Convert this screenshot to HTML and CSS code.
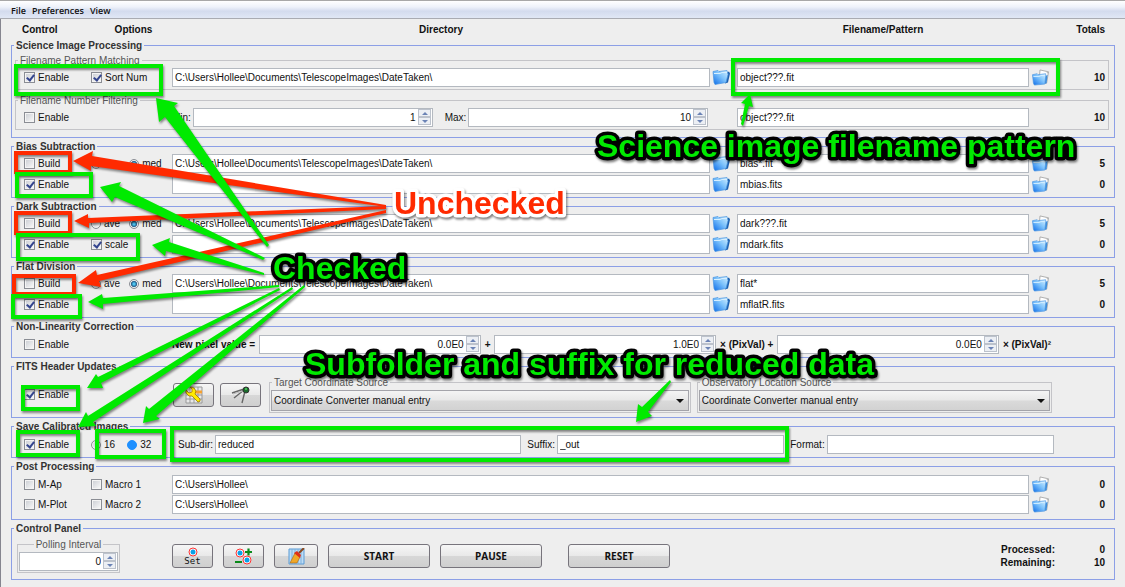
FILE: index.html
```html
<!DOCTYPE html>
<html lang="en">
<head>
<meta charset="utf-8">
<title>Data Processor</title>
<link rel="stylesheet" href="styles.css">
</head>
<body>
<svg class="defs" aria-hidden="true">
  <defs>
    <linearGradient id="blue" x1="1" y1="0" x2="0" y2="1">
      <stop offset="0" stop-color="#d4f0ff"/><stop offset=".45" stop-color="#7cc2fc"/><stop offset="1" stop-color="#0a6ae8"/>
    </linearGradient>
    <symbol id="folder" viewBox="0 0 19 16">
      <path d="M13 4l4-2 1 2-2 9-3 1z" fill="#1b5fae"/>
      <path d="M1 2l5-1 1 1 8-1 1 4-2 8-11 2-1-2z" fill="url(#blue)" stroke="#4a95e0" stroke-width=".7"/>
      <path d="M2 4l6 0 2-1 5 0" stroke="#d6efff" fill="none"/>
    </symbol>
    <symbol id="folder-doc" viewBox="0 0 19 18">
      <path d="M9 1l9 2-2 12-8-2z" fill="#fff" stroke="#999" stroke-width=".8"/>
      <path d="M15 2l3 1-1 2z" fill="#bbb"/>
      <path d="M14 8l3-2-1 9-2 1z" fill="#3f8fdc"/>
      <path d="M1 6l5-1 1 1 8-1 0 3-1 8-11 1-1-2z" fill="url(#blue)" stroke="#4a95e0" stroke-width=".7"/>
      <path d="M2 8l6 0 2-1 4 0" stroke="#d6efff" fill="none"/>
    </symbol>
  </defs>
</svg>

<nav class="menubar">
  <button type="button">File</button><button type="button">Preferences</button><button type="button">View</button>
</nav>

<main class="panel">
  <header class="cols heads">
    <b>Control</b><b>Options</b><b>Directory</b><span></span><b>Filename/Pattern</b><b>Totals</b>
  </header>

  <fieldset class="group">
    <legend>Science Image Processing</legend>
    <div class="nest">
      <fieldset class="sub">
        <legend>Filename Pattern Matching</legend>
        <div class="cols sub-body">
          <label class="opt"><input type="checkbox" checked>Enable</label>
          <label class="opt"><input type="checkbox" checked>Sort Num</label>
          <input class="field" type="text" aria-label="Science directory" value="C:\Users\Hollee\Documents\TelescopeImages\DateTaken\">
          <button class="pick" type="button" aria-label="Choose science directory"><svg><use href="#folder"/></svg></button>
          <input class="field" type="text" aria-label="Science filename pattern" value="object???.fit">
          <div class="end"><button class="pick doc" type="button" aria-label="Choose science file"><svg><use href="#folder-doc"/></svg></button><b>10</b></div>
        </div>
      </fieldset>
      <fieldset class="sub">
        <legend>Filename Number Filtering</legend>
        <div class="cols sub-body">
          <label class="opt"><input type="checkbox">Enable</label>
          <span></span>
          <div class="range">
            <label for="min">Min:</label>
            <span class="spin"><input id="min" type="text" value="1"><button type="button" aria-label="Increase"></button><button type="button" aria-label="Decrease"></button></span>
            <label for="max" class="second">Max:</label>
            <span class="spin"><input id="max" type="text" value="10"><button type="button" aria-label="Increase"></button><button type="button" aria-label="Decrease"></button></span>
          </div>
          <span></span>
          <input class="field" type="text" aria-label="Number filter pattern" value="object???.fit">
          <div class="end"><b>10</b></div>
        </div>
      </fieldset>
    </div>
  </fieldset>

  <fieldset class="group">
    <legend>Bias Subtraction</legend>
    <div class="rows">
      <div class="cols">
        <label class="opt"><input type="checkbox">Build</label>
        <div class="pair"><label class="opt"><input type="radio" name="bias">ave</label><label class="opt"><input type="radio" name="bias" checked>med</label></div>
        <input class="field" type="text" aria-label="Bias directory" value="C:\Users\Hollee\Documents\TelescopeImages\DateTaken\">
        <button class="pick" type="button" aria-label="Choose bias directory"><svg><use href="#folder"/></svg></button>
        <input class="field" type="text" aria-label="Bias pattern" value="bias*.fit">
        <div class="end"><button class="pick doc" type="button" aria-label="Choose bias file"><svg><use href="#folder-doc"/></svg></button><b>5</b></div>
      </div>
      <div class="cols">
        <label class="opt"><input type="checkbox" checked>Enable</label>
        <span></span>
        <input class="field" type="text" aria-label="Master bias directory">
        <button class="pick" type="button" aria-label="Choose master bias directory"><svg><use href="#folder"/></svg></button>
        <input class="field" type="text" aria-label="Master bias file" value="mbias.fits">
        <div class="end"><button class="pick doc" type="button" aria-label="Choose master bias file"><svg><use href="#folder-doc"/></svg></button><b>0</b></div>
      </div>
    </div>
  </fieldset>

  <fieldset class="group">
    <legend>Dark Subtraction</legend>
    <div class="rows">
      <div class="cols">
        <label class="opt"><input type="checkbox">Build</label>
        <div class="pair"><label class="opt"><input type="radio" name="dark">ave</label><label class="opt"><input type="radio" name="dark" checked>med</label></div>
        <input class="field" type="text" aria-label="Dark directory" value="C:\Users\Hollee\Documents\TelescopeImages\DateTaken\">
        <button class="pick" type="button" aria-label="Choose dark directory"><svg><use href="#folder"/></svg></button>
        <input class="field" type="text" aria-label="Dark pattern" value="dark???.fit">
        <div class="end"><button class="pick doc" type="button" aria-label="Choose dark file"><svg><use href="#folder-doc"/></svg></button><b>5</b></div>
      </div>
      <div class="cols">
        <label class="opt"><input type="checkbox" checked>Enable</label>
        <label class="opt"><input type="checkbox" checked>scale</label>
        <input class="field" type="text" aria-label="Master dark directory">
        <button class="pick" type="button" aria-label="Choose master dark directory"><svg><use href="#folder"/></svg></button>
        <input class="field" type="text" aria-label="Master dark file" value="mdark.fits">
        <div class="end"><button class="pick doc" type="button" aria-label="Choose master dark file"><svg><use href="#folder-doc"/></svg></button><b>0</b></div>
      </div>
    </div>
  </fieldset>

  <fieldset class="group">
    <legend>Flat Division</legend>
    <div class="rows">
      <div class="cols">
        <label class="opt"><input type="checkbox">Build</label>
        <div class="pair"><label class="opt"><input type="radio" name="flat">ave</label><label class="opt"><input type="radio" name="flat" checked>med</label></div>
        <input class="field" type="text" aria-label="Flat directory" value="C:\Users\Hollee\Documents\TelescopeImages\DateTaken\">
        <button class="pick" type="button" aria-label="Choose flat directory"><svg><use href="#folder"/></svg></button>
        <input class="field" type="text" aria-label="Flat pattern" value="flat*">
        <div class="end"><button class="pick doc" type="button" aria-label="Choose flat file"><svg><use href="#folder-doc"/></svg></button><b>5</b></div>
      </div>
      <div class="cols">
        <label class="opt"><input type="checkbox" checked>Enable</label>
        <span></span>
        <input class="field" type="text" aria-label="Master flat directory">
        <button class="pick" type="button" aria-label="Choose master flat directory"><svg><use href="#folder"/></svg></button>
        <input class="field" type="text" aria-label="Master flat file" value="mflatR.fits">
        <div class="end"><button class="pick doc" type="button" aria-label="Choose master flat file"><svg><use href="#folder-doc"/></svg></button><b>0</b></div>
      </div>
    </div>
  </fieldset>

  <fieldset class="group">
    <legend>Non-Linearity Correction</legend>
    <div class="line single">
      <label class="opt"><input type="checkbox">Enable</label>
      <div class="formula">
        <b>New pixel value =</b>
        <span class="spin"><input aria-label="Constant coefficient" type="text" value="0.0E0"><button type="button" aria-label="Increase"></button><button type="button" aria-label="Decrease"></button></span>
        <b>+</b>
        <span class="spin"><input aria-label="Linear coefficient" type="text" value="1.0E0"><button type="button" aria-label="Increase"></button><button type="button" aria-label="Decrease"></button></span>
        <b>× (PixVal) +</b>
        <span class="spin"><input aria-label="Quadratic coefficient" type="text" value="0.0E0"><button type="button" aria-label="Increase"></button><button type="button" aria-label="Decrease"></button></span>
        <b>× (PixVal)²</b>
      </div>
    </div>
  </fieldset>

  <fieldset class="group">
    <legend>FITS Header Updates</legend>
    <div class="line fits">
      <label class="opt"><input type="checkbox" checked>Enable</label>
      <div class="sources">
        <button class="btn tool" type="button" aria-label="Header settings">
          <svg width="18" height="18" viewBox="0 0 18 18"><path d="M1 1h16v16H1z" fill="#e8e8e8"/><path d="M1 1v16M5 1v16M9 1v16M13 1v16M17 1v16M1 1h16M1 9h16M1 13h16M1 17h16" stroke="#999" fill="none"/><path d="M10 6h7" stroke="#f5a030" stroke-width="3"/><path d="M5 1l4 1 2 3-1 3 5 5q1 3-2 3l-6-6-3 0-3-3 0-3 3 3 3-1 0-3z" fill="#ffea00" stroke="#a07800" stroke-width=".8"/></svg>
        </button>
        <button class="btn tool" type="button" aria-label="Coordinate converter">
          <svg width="20" height="18" viewBox="0 0 20 18"><path d="M1 7l12-4M3 12l10-8M11 17l3-12" stroke="#666" stroke-width="1.400"/><path d="M2 8l10-3" stroke="#bbb"/><circle cx="15" cy="4" r="3" fill="#1b6c2c" stroke="#333"/><circle cx="15" cy="3" r="1" fill="#52d35f"/></svg>
        </button>
        <fieldset class="sub target">
          <legend>Target Coordinate Source</legend>
          <div class="drop"><select aria-label="Target Coordinate Source"><option>Coordinate Converter manual entry</option></select></div>
        </fieldset>
        <fieldset class="sub observatory">
          <legend>Observatory Location Source</legend>
          <div class="drop"><select aria-label="Observatory Location Source"><option>Coordinate Converter manual entry</option></select></div>
        </fieldset>
      </div>
    </div>
  </fieldset>

  <fieldset class="group">
    <legend>Save Calibrated Images</legend>
    <div class="line single">
      <label class="opt"><input type="checkbox" checked>Enable</label>
      <div class="pair depth"><label class="opt"><input type="radio" name="bits">16</label><label class="opt"><input class="marked" type="radio" name="bits" checked>32</label></div>
      <div class="saving">
        <label for="subdir">Sub-dir:</label><input id="subdir" class="field wide" type="text" value="reduced">
        <label for="suffix" class="second">Suffix:</label><input id="suffix" class="field" type="text" value="_out">
        <label for="format" class="second">Format:</label><input id="format" class="field" type="text">
      </div>
    </div>
  </fieldset>

  <fieldset class="group">
    <legend>Post Processing</legend>
    <div class="rows post">
      <div class="cols">
        <label class="opt"><input type="checkbox">M-Ap</label>
        <label class="opt"><input type="checkbox">Macro 1</label>
        <input class="field span" type="text" aria-label="Macro 1 path" value="C:\Users\Hollee\">
        <div class="end"><button class="pick doc" type="button" aria-label="Choose macro 1"><svg><use href="#folder-doc"/></svg></button><b>0</b></div>
      </div>
      <div class="cols">
        <label class="opt"><input type="checkbox">M-Plot</label>
        <label class="opt"><input type="checkbox">Macro 2</label>
        <input class="field span" type="text" aria-label="Macro 2 path" value="C:\Users\Hollee\">
        <div class="end"><button class="pick doc" type="button" aria-label="Choose macro 2"><svg><use href="#folder-doc"/></svg></button><b>0</b></div>
      </div>
    </div>
  </fieldset>

  <fieldset class="group">
    <legend>Control Panel</legend>
    <div class="control">
      <fieldset class="sub polling">
        <legend>Polling Interval</legend>
        <span class="spin"><input aria-label="Polling Interval" type="text" value="0"><button type="button" aria-label="Increase"></button><button type="button" aria-label="Decrease"></button></span>
      </fieldset>
      <div class="actions">
        <button class="btn tool set" type="button"><svg width="10" height="10" viewBox="0 0 10 10"><circle cx="5" cy="5" r="4" fill="#fff" stroke="#f33"/><circle cx="5" cy="5" r="2.500" fill="#0aa0e8"/></svg>Set</button>
        <button class="btn tool" type="button" aria-label="Change apertures"><svg width="18" height="17" viewBox="0 0 18 17"><circle cx="5" cy="5" r="4" fill="#fff" stroke="#f33"/><circle cx="5" cy="5" r="2.500" fill="#0aa0e8"/><circle cx="12" cy="12" r="4" fill="#fff" stroke="#f33"/><circle cx="12" cy="12" r="2.500" fill="#0aa0e8"/><path d="M10 4h7M13.500.5v7M0 14h7" stroke="#0a8a1a" stroke-width="2.200"/></svg></button>
        <button class="btn tool clear" type="button" aria-label="Clear"><svg width="17" height="17" viewBox="0 0 17 17"><path d="M1 1h15v15H1z" fill="#bddcf5" stroke="#5a9bd5"/><path d="M4 1v15M7 1v15M10 1v15M13 1v15" stroke="#7fb0dc"/><path d="M16 0l-5 5" stroke="#8a4a20" stroke-width="2"/><path d="M7 5l5 4-3 6-7 0z" fill="#f0a828" stroke="#a86010" stroke-width=".6"/><path d="M9 3l4 4-1 3-6-5z" fill="#e03018"/></svg></button>
        <button class="btn main" type="button">START</button>
        <button class="btn main" type="button">PAUSE</button>
        <button class="btn main reset" type="button">RESET</button>
      </div>
      <dl class="stats"><dt>Processed:</dt><dd>0</dd><dt>Remaining:</dt><dd>10</dd></dl>
    </div>
  </fieldset>
</main>

<svg class="notes" viewBox="0 0 1125 587">
  <g class="red">
    <path class="arrow" d="M386 205L92 156L93 151L73 161L91 171L91 166L386 207z"/>
    <path class="arrow" d="M386 206L88 218L88 214L74 221L89 228L89 223L386 209z"/>
    <path class="arrow" d="M386 210L97 275L96 270L78 283L101 287L99 281L386 213z"/>
    <rect x="16" y="153" width="54" height="19"/>
    <rect x="16" y="213" width="54" height="20"/>
    <rect x="14" y="276" width="60" height="18"/>
  </g>
  <g class="green">
    <path class="arrow" d="M269 245L174 106L178 103L156 98L159 122L165 117L267 247z"/>
    <path class="arrow" d="M265 258L119 186L121 182L100 187L112 202L115 197L263 260z"/>
    <path class="arrow" d="M264 273L169 242L170 238L152 245L165 256L166 251L264 275z"/>
    <path class="arrow" d="M279 285L103 298L102 294L88 302L103 309L103 304L279 287z"/>
    <path class="arrow" d="M279 288L98 377L96 374L87 388L103 388L101 383L280 290z"/>
    <path class="arrow" d="M292 287L88 416L86 412L78 427L96 426L93 422L293 289z"/>
    <path class="arrow" d="M304 285L149 409L146 406L143 423L160 419L156 416L305 287z"/>
    <path class="arrow" d="M743 126L749 106L753 107L750 94L741 103L745 104L741 124z"/>
    <path class="arrow" d="M670 380L642 407L638 404L636 422L652 416L648 412L671 382z"/>
    <rect x="16" y="66" width="145" height="28"/>
    <rect x="733" y="60" width="325" height="34"/>
    <rect x="17" y="174" width="74" height="22"/>
    <rect x="18" y="235" width="120" height="24"/>
    <rect x="13" y="296" width="67" height="21"/>
    <rect x="23" y="387" width="55" height="22"/>
    <rect x="18" y="432" width="60" height="23"/>
    <rect x="97" y="431" width="67" height="26"/>
    <rect x="172" y="428" width="615" height="32"/>
  </g>
  <text class="on-dark" x="597" y="157">Science image filename pattern</text>
  <text class="on-dark" x="273" y="279">Checked</text>
  <text class="on-dark" x="305" y="375">Subfolder and suffix for reduced data</text>
  <text class="on-light" x="394" y="214">Unchecked</text>
</svg>
</body>
</html>
```

FILE: styles.css
```css
* { box-sizing: border-box; }

body {
  margin: 0;
  position: relative;
  min-height: 100vh;
  background: #eeeeee;
  color: #111;
  font: 10px/13px "Liberation Sans", Arial, sans-serif;
}

button, input, select { font: inherit; color: inherit; margin: 0; }
fieldset { margin: 0; padding: 0; min-width: 0; }
.defs { position: absolute; width: 0; height: 0; }

.menubar {
  display: flex;
  gap: 6px;
  height: 19px;
  padding: 1px 11px 0;
  border-top: 1px solid #a8a8a8;
  border-bottom: 1px solid #a9abb2;
  background: linear-gradient(#ffffff, #eef2fa 35%, #d3dbee 60%, #e0e7f5);
}
.menubar button {
  padding: 0;
  border: 0;
  background: none;
  font: 9px/13px "Open Sans", sans-serif;
  font-weight: 600;
}

.panel {
  display: flex;
  flex-direction: column;
  gap: 2px;
  padding: 0 10px 7px;
  border-left: 1px solid #85858f;
}

.cols {
  display: grid;
  grid-template-columns: 67px 81px minmax(0, 538fr) 27px minmax(0, 292fr) 76px;
  align-items: center;
}
.heads {
  height: 20px;
  margin-bottom: -2px;
  padding: 0 10px 0 13px;
  text-align: center;
}
.heads b:nth-child(1) { text-align: left; margin-left: -2px; }
.heads b:nth-child(2) { padding-left: 4px; }
.heads b:last-child { text-align: right; }

.group { border: 1px solid #8c9fe6; }
.group > legend { margin-left: 2px; padding: 0 2px; font-weight: bold; color: #333; }
.nest { display: flex; flex-direction: column; gap: 4px; padding: 2px 5px 7px 3px; }
.rows { display: flex; flex-direction: column; gap: 2px; padding: 1px 9px 3px 12px; }
.post { gap: 1px; padding-top: 2px; padding-bottom: 5px; }

.sub { border: 1px solid #c4c4c8; }
.sub > legend { margin-left: 2px; padding: 0 2px; color: #555; }
.sub-body { padding: 1px 3px 2px 8px; }

.opt { display: flex; align-items: center; gap: 3px; white-space: nowrap; }
.opt input {
  appearance: none;
  flex: none;
  position: relative;
  width: 11px;
  height: 11px;
  border: 1px solid #8a8d94;
  background: linear-gradient(135deg, #c9ccd2, #fbfbfb);
  box-shadow: inset 0 0 0 1px #f4f4f4;
}
.opt input[type="checkbox"]:checked::before {
  content: "";
  position: absolute;
  left: 3px;
  top: 0;
  width: 3px;
  height: 6px;
  border: solid #34458f;
  border-width: 0 2px 2px 0;
  transform: rotate(38deg);
}
.opt input[type="radio"] { width: 10px; height: 10px; border-radius: 50%; }
.opt input[type="radio"]:checked { background: radial-gradient(circle, #4fc5f0 0 1px, #10406f 3px, #dfe6ec 4px); }
.opt input.marked[type="radio"]:checked { background: #1e90ff; border-color: #1e90ff; box-shadow: none; }
.pair { display: flex; gap: 9px; }

.field {
  width: 100%;
  min-width: 0;
  height: 19px;
  padding: 0 2px;
  border: 1px solid #b4b9c0;
  background: #fff;
}
.span { grid-column: 3 / 6; }

.pick { width: 19px; height: 18px; margin-left: 2px; padding: 0; border: 0; background: none; }
.pick svg { display: block; width: 19px; height: 17px; }
.end { display: flex; align-items: center; justify-content: space-between; }
.end b:only-child { margin-left: auto; }

.range, .formula, .saving, .sources { display: flex; align-items: center; min-width: 0; }
.range { gap: 2px; padding-right: 2px; }
.range .second { margin-left: 10px; }

.spin {
  display: grid;
  grid-template-columns: minmax(0, 1fr) 13px;
  grid-template-rows: 8px 8px;
  flex: 1 1 0;
  min-width: 0;
  height: 19px;
  padding: 0 1px 1px 0;
  border: 1px solid #b4b9c0;
  background: #fff;
  align-content: center;
}
.spin input { grid-row: 1 / 3; width: 100%; padding: 0 2px; border: 0; background: none; text-align: right; }
.spin button { position: relative; padding: 0; border: 1px solid #bcc2cc; background: #eceff4; }
.spin button::before {
  content: "";
  position: absolute;
  left: 3px;
  top: 2px;
  border: solid transparent;
  border-width: 0 3px 3px;
  border-bottom-color: #6b83b5;
}
.spin button:last-child::before { border-width: 3px 3px 0; border-top-color: #6b83b5; }

.line { display: flex; align-items: center; padding: 0 9px 0 12px; }
.line > .opt { flex: none; width: 67px; }
.single { padding-top: 2px; padding-bottom: 3px; }
.formula { flex: 1; gap: 4px; margin: 0 54px 0 81px; }
.fits { padding-top: 3px; padding-bottom: 4px; }
.sources { flex: 1; margin: 0 53px 0 82px; gap: 6px; }
.target { flex: 422 1 0; margin-left: 2px; }
.observatory { flex: 355 1 0; }
.drop { position: relative; padding: 1px; }
.drop::after {
  content: "";
  position: absolute;
  right: 6px;
  top: 10px;
  border: solid transparent;
  border-width: 4px 4px 0;
  border-top-color: #111;
}
.drop select {
  appearance: none;
  display: block;
  width: 100%;
  height: 21px;
  padding: 0 2px;
  border: 1px solid #a4a4aa;
  border-radius: 0;
  background: linear-gradient(#f4f4f4, #e8e8e8 48%, #dadada 52%, #d2d2d2);
}

.depth { flex: none; width: 81px; gap: 12px; }
.saving { flex: 1; gap: 2px; margin: 0 51px 0 6px; }
.saving .field { flex: 227 1 0; }
.saving .wide { flex: 308 1 0; }
.saving .second { margin-left: 4px; }

.btn {
  display: flex;
  align-items: center;
  justify-content: center;
  flex: none;
  height: 24px;
  padding: 0;
  border: 1px solid #77747c;
  border-radius: 3px;
  background: linear-gradient(#f6f6f6, #e9e9e9 48%, #d7d7d7 52%, #cfcfcf);
}
.tool { width: 41px; }
.set { flex-direction: column; font: 9px/9px "DejaVu Sans Mono", monospace; }
.clear { width: 44px; }
.main { width: 102px; font: bold 10px/13px "Open Sans", sans-serif; }
.reset { margin-left: 16px; }

.control { display: grid; grid-template-columns: 155px 1fr auto; padding: 3px 9px 6px 5px; }
.polling { width: 103px; padding: 1px; }
.polling > legend { margin: 0 auto; }
.actions { display: flex; gap: 10px; padding-top: 6px; }
.stats {
  display: grid;
  grid-template-columns: auto 50px;
  align-content: center;
  margin: 0;
  text-align: right;
  font-weight: bold;
}
.stats dd { margin: 0; }

.notes { position: absolute; left: 0; top: 0; width: 100%; pointer-events: none; }
.notes rect { fill: none; stroke-width: 4; }
.notes g { filter: drop-shadow(1px 2px 1px rgba(0, 0, 0, .45)); }
.green { fill: #00ea00; stroke: #00ea00; }
.red { fill: #ff2a00; stroke: #ff2a00; }
.notes .arrow { stroke: none; }
.notes text {
  font: bold 32px "Liberation Sans", Arial, sans-serif;
  paint-order: stroke;
  stroke-width: 7;
  stroke-linejoin: round;
  filter: drop-shadow(1px 2px 1px rgba(0, 0, 0, .5));
}
.on-dark { fill: #00ea00; stroke: #000; }
.on-light { fill: #ff2a00; stroke: #fff; }
```
